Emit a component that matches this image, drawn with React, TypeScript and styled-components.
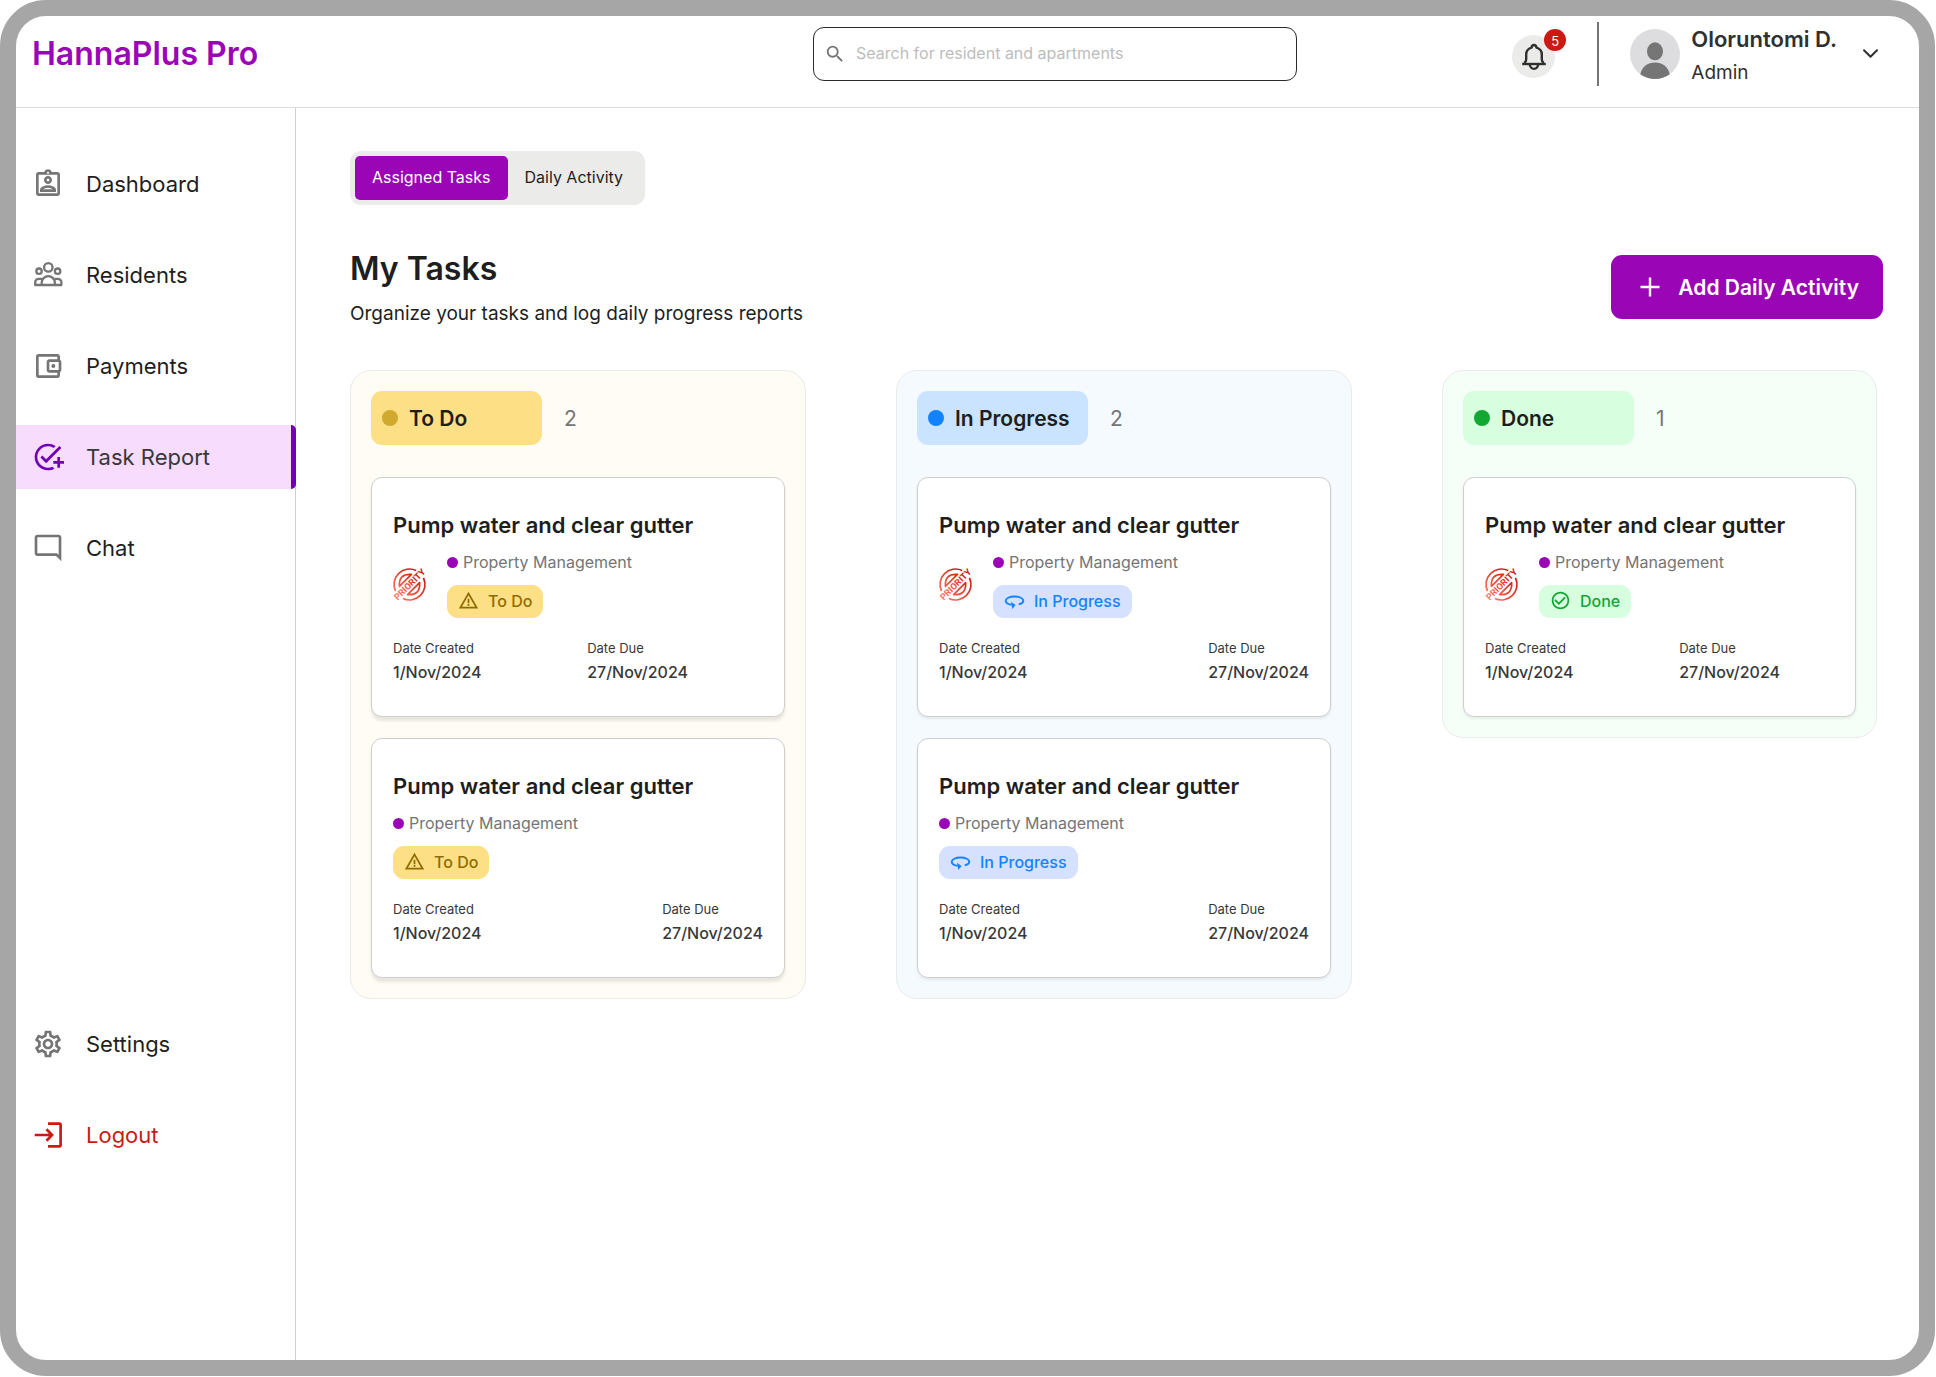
import React from "react";
import styled, { createGlobalStyle, css } from "styled-components";
import {
  MdAddTask,
  MdOutlineAccountBalanceWallet,
  MdOutlineAssignmentInd,
  MdOutlineModeComment,
  MdOutlineSettings,
  MdSearch,
  MdWarningAmber,
  MdCheckCircleOutline,
} from "react-icons/md";

const purple = "#9a06b6";
const ink = "#1e1e1e";
const grey = "#757575";
const red = "#cb1a14";

const GlobalStyle = createGlobalStyle`
  *, *::before, *::after { box-sizing: border-box; }
  body { margin: 0; background: #fff; }
  body, button, input { font-family: Inter, "Liberation Sans", sans-serif; }
  h1, h2, h3, p, ul, dl, dd { margin: 0; padding: 0; }
  ul { list-style: none; }
  button { border: 0; padding: 0; background: none; color: inherit; cursor: pointer; }
  a { color: inherit; text-decoration: none; }
  svg { display: block; flex: none; }
`;

const Frame = styled.div`
  display: flex;
  flex-direction: column;
  min-height: calc(100vh - 1px);
  margin: 0 1px 1px 0;
  border: 16px solid #a6a6a6;
  border-radius: 46px;
  background: #fff;
  color: ${ink};
`;

/* ---------- header ---------- */

const Header = styled.header`
  display: grid;
  grid-template-columns: 781fr 484fr 584fr;
  align-items: center;
  height: 92px;
  padding: 0 38px 16px 16px;
  border-bottom: 1px solid #dcdcdc;
`;

const Brand = styled.a`
  color: ${purple};
  font-size: 32px;
  line-height: 40px;
  font-weight: 600;
`;

const SearchBox = styled.label`
  display: flex;
  align-items: center;
  gap: 10px;
  height: 54px;
  padding: 0 10px;
  border: 1px solid #2b2b2b;
  border-radius: 11px;
  background: #fff;
  color: ${grey};
`;

const SearchInput = styled.input`
  flex: 1;
  min-width: 0;
  border: 0;
  padding: 0 0 2px;
  outline: 0;
  background: none;
  color: ${ink};
  font-size: 16px;
  line-height: 24px;
  &::placeholder {
    color: #bdbdbd;
    opacity: 1;
  }
`;

const HeaderTools = styled.div`
  display: flex;
  align-items: center;
  justify-self: end;
`;

const BellButton = styled.button`
  position: relative;
  width: 54px;
  padding-top: 6px;
  color: #303030;
`;

const BellCircle = styled.span`
  display: flex;
  align-items: center;
  justify-content: center;
  width: 43px;
  height: 43px;
  border-radius: 50%;
  background: #ebebea;
`;

const BellCount = styled.span`
  position: absolute;
  top: 0;
  right: 0;
  width: 22px;
  height: 22px;
  border-radius: 50%;
  background: ${red};
  color: #fff;
  font-size: 13px;
  line-height: 24px;
  text-align: center;
`;

const Divider = styled.span`
  width: 2px;
  height: 64px;
  margin: 0 31px;
  background: ${grey};
`;

const Account = styled.button`
  display: flex;
  align-items: center;
  text-align: left;
  color: #303030;
`;

const AccountText = styled.span`
  display: flex;
  flex-direction: column;
  gap: 8px;
  margin: 0 23px 0 11px;
  padding-top: 2px;
`;

const AccountName = styled.span`
  font-size: 22px;
  line-height: 28px;
  font-weight: 600;
`;

const AccountRole = styled.span`
  font-size: 19px;
  line-height: 24px;
`;

/* ---------- sidebar ---------- */

const Body = styled.div`
  display: flex;
  flex: 1;
`;

const Sidebar = styled.nav`
  display: flex;
  flex-direction: column;
  flex: none;
  gap: 432px;
  width: 280px;
  padding: 44px 0;
  border-right: 1px solid #cfcfcf;
`;

const NavList = styled.ul`
  display: flex;
  flex-direction: column;
  gap: 27px;
`;

const NavLink = styled.a<{ $active?: boolean; $danger?: boolean }>`
  display: flex;
  align-items: center;
  gap: 22px;
  height: 64px;
  padding-left: 16px;
  font-size: 22px;
  line-height: 32px;
  color: ${(p) => (p.$danger ? red : ink)};
  svg {
    color: ${(p) => (p.$danger ? red : grey)};
  }
  ${(p) =>
    p.$active &&
    css`
      margin-right: -1px;
      border-right: 5px solid #6f00b3;
      border-radius: 0 5px 5px 0;
      background: #f7dcfd;
      color: #383838;
      svg {
        color: #6f00b3;
      }
    `}
`;

/* ---------- main ---------- */

const Main = styled.main`
  flex: 1;
  min-width: 0;
  padding: 43px 36px 43px 54px;
`;

const Tabs = styled.div`
  display: inline-flex;
  padding: 5px;
  border-radius: 11px;
  background: #ebebea;
`;

const Tab = styled.button<{ $active?: boolean }>`
  height: 44px;
  padding: 0 17px 2px;
  border-radius: 5px;
  font-size: 16px;
  line-height: 24px;
  background: ${(p) => (p.$active ? purple : "transparent")};
  color: ${(p) => (p.$active ? "#fff" : ink)};
`;

const Heading = styled.div`
  display: flex;
  align-items: center;
  justify-content: space-between;
  margin: 43px 0 44px;
`;

const Title = styled.h1`
  margin-bottom: 12px;
  font-size: 32px;
  line-height: 42px;
  font-weight: 600;
`;

const Subtitle = styled.p`
  font-size: 19px;
  line-height: 24px;
`;

const AddButton = styled.button`
  display: flex;
  align-items: center;
  gap: 11px;
  height: 64px;
  padding: 2px 24px 0;
  border-radius: 11px;
  background: ${purple};
  color: #fff;
  font-size: 21px;
  line-height: 32px;
  font-weight: 600;
`;

const Board = styled.div`
  display: grid;
  grid-template-columns: 456fr 456fr 435fr;
  align-items: start;
  gap: 90px;
  margin-right: 6px;
`;

type Status = "todo" | "progress" | "done";

const tones: Record<
  Status,
  { label: string; surface: string; pill: string; dot: string; badge: string; text: string; shadow: string }
> = {
  todo: {
    label: "To Do",
    surface: "#fffcf5",
    pill: "#fddf86",
    dot: "#d0a92f",
    badge: "#fddf86",
    text: "#8f6c00",
    shadow: "0 4px 3px rgba(0, 0, 0, 0.09)",
  },
  progress: {
    label: "In Progress",
    surface: "#f5faff",
    pill: "#cae3ff",
    dot: "#1283ff",
    badge: "#d5e1ff",
    text: "#1283ff",
    shadow: "0 2px 3px rgba(0, 0, 0, 0.07)",
  },
  done: {
    label: "Done",
    surface: "#f5fff8",
    pill: "#d7ffdf",
    dot: "#12a633",
    badge: "#d7ffdf",
    text: "#12a633",
    shadow: "0 2px 3px rgba(0, 0, 0, 0.07)",
  },
};

const Column = styled.section<{ $status: Status }>`
  display: flex;
  flex-direction: column;
  gap: 21px;
  padding: 20px;
  border: 1px solid #ebebea;
  border-radius: 21px;
  background: ${(p) => tones[p.$status].surface};
`;

const ColumnHeader = styled.div`
  display: flex;
  align-items: center;
  gap: 22px;
  margin-bottom: 11px;
`;

const ColumnPill = styled.h2<{ $status: Status }>`
  display: flex;
  align-items: center;
  gap: 11px;
  width: 171px;
  height: 54px;
  padding: 0 11px;
  border-radius: 11px;
  background: ${(p) => tones[p.$status].pill};
  font-size: 21px;
  line-height: 33px;
  font-weight: 600;
`;

const Dot = styled.span<{ $size: number; $color: string }>`
  flex: none;
  width: ${(p) => p.$size}px;
  height: ${(p) => p.$size}px;
  border-radius: 50%;
  background: ${(p) => p.$color};
`;

const Count = styled.span`
  color: ${grey};
  font-size: 21px;
  line-height: 33px;
`;

const Card = styled.article<{ $status: Status }>`
  padding: 32px 21px;
  border: 1px solid #cfcfcf;
  border-radius: 11px;
  background: #fff;
  box-shadow: ${(p) => tones[p.$status].shadow};
`;

const CardTitle = styled.h3`
  font-size: 22px;
  line-height: 30px;
  font-weight: 600;
`;

const CardMeta = styled.div`
  display: flex;
  align-items: center;
  gap: 21px;
  margin: 10px 0 22px;
`;

const MetaLines = styled.div`
  display: flex;
  flex-direction: column;
  align-items: flex-start;
  gap: 11px;
`;

const Department = styled.p`
  display: flex;
  align-items: center;
  gap: 5px;
  color: ${grey};
  font-size: 16px;
  line-height: 24px;
`;

const Badge = styled.span<{ $status: Status }>`
  display: flex;
  align-items: center;
  gap: 9px;
  height: 33px;
  padding: 0 11px 2px;
  border-radius: 11px;
  background: ${(p) => tones[p.$status].badge};
  color: ${(p) => tones[p.$status].text};
  font-size: 16px;
  line-height: 24px;
  font-weight: 500;
`;

const Dates = styled.dl<{ $compact?: boolean }>`
  display: flex;
  justify-content: space-between;
  max-width: ${(p) => (p.$compact ? "295px" : "none")};
`;

const DateLabel = styled.dt`
  margin-bottom: 4px;
  color: #383838;
  font-size: 13px;
  line-height: 16px;
`;

const DateValue = styled.dd`
  color: #383838;
  font-size: 16px;
  line-height: 24px;
  font-weight: 500;
`;

/* ---------- drawings ---------- */

const PeopleIcon = () => (
  <svg width="32" height="32" viewBox="0 0 32 32" fill="none" stroke="currentColor" strokeWidth="2.3">
    <circle cx="16.3" cy="8.4" r="4.2" />
    <circle cx="7" cy="12.2" r="2.7" />
    <circle cx="25.6" cy="12.2" r="2.7" />
    <path d="M9.7 26v-2.2a6.6 6.6 0 0 1 13.2 0V26" />
    <path d="M10.2 19.8H6.8A3.6 3.6 0 0 0 3.2 23.4V26h26.2v-2.6a3.6 3.6 0 0 0-3.6-3.6h-3.4" strokeLinejoin="round" />
  </svg>
);

const LogoutIcon = () => (
  <svg width="32" height="32" viewBox="0 0 32 32" fill="none" stroke="currentColor" strokeWidth="2.7">
    <path d="M16 4.7h11.3a1.3 1.3 0 0 1 1.3 1.3v20a1.3 1.3 0 0 1-1.3 1.3H16" />
    <path d="M2.7 16h17M14.5 10.3 20 16l-5.5 5.7" />
  </svg>
);

const BellIcon = () => (
  <svg width="28" height="28" viewBox="0 0 28 28" fill="none" stroke="currentColor" strokeWidth="2.4" strokeLinejoin="round">
    <path d="M2.2 21h23.6" />
    <path d="M5 21V19c1-.6 1.2-1.6 1.2-2.8V11.8a7.3 7.3 0 0 1 5.3-7.2C11.7 3 12.6 2 14 2s2.3 1 2.5 2.6a7.3 7.3 0 0 1 5.3 7.2v4.4c0 1.2.2 2.2 1.2 2.8v2" />
    <path d="M9.8 21.3a4.2 4.6 0 0 0 8.4 0" />
  </svg>
);

const AvatarIcon = () => (
  <svg width="50" height="50" viewBox="0 0 50 50">
    <circle cx="25" cy="25" r="25" fill="#dddde0" />
    <ellipse cx="25" cy="22.3" rx="8" ry="9" fill={grey} />
    <path d="M10.3 45.2C12 38 17.5 33.6 25 33.6s13 4.4 14.7 11.6A25 25 0 0 1 10.3 45.2Z" fill={grey} />
  </svg>
);

const ChevronIcon = () => (
  <svg width="21" height="21" viewBox="0 0 21 21" fill="none" stroke="currentColor" strokeWidth="2" strokeLinecap="round" strokeLinejoin="round">
    <path d="m4 7.2 6.5 6.5L17 7.2" />
  </svg>
);

const PlusIcon = () => (
  <svg width="32" height="32" viewBox="0 0 32 32" stroke="currentColor" strokeWidth="2.4">
    <path d="M15 5.5v19M5.500 15h19" />
  </svg>
);

const SpinIcon = () => (
  <svg width="21" height="21" viewBox="0 0 21 21" fill="none" stroke="currentColor" strokeWidth="1.9">
    <path d="M14.8 14.3c2.7-.6 4.5-1.9 4.5-3.5 0-2.4-3.9-4.3-8.8-4.3S1.7 8.4 1.7 10.8c0 1.9 2.5 3.5 6 4.1" />
    <path d="m7 11.7 4.6 3.4L8.3 19Z" fill="currentColor" stroke="none" />
  </svg>
);

const PriorityStamp = ({ id }: { id: string }) => (
  <svg width="33" height="33" viewBox="0 0 33 33" overflow="visible" role="img" aria-label="Priority">
    <defs>
      <linearGradient id={id} gradientUnits="userSpaceOnUse" x1="-16" y1="0" x2="16" y2="0">
        <stop offset="0" stopColor="#ff7361" />
        <stop offset="1" stopColor="#c71505" />
      </linearGradient>
    </defs>
    <g transform="translate(16.5 16.5) rotate(-45)" fill="none" stroke={`url(#${id})`} strokeWidth="1.7">
      <path d="M-14.6-5.2a15.5 15.5 0 0 1 29.2 0M-14.6 5.2a15.5 15.5 0 0 0 29.2 0" />
      <path d="M-8.5-5.8Q0-15.5 8.5-5.8ZM-8.5 5.8Q0 15.5 8.5 5.8Z" strokeLinejoin="round" />
      <text
        x="0"
        y="3.2"
        textAnchor="middle"
        fontFamily="Roboto, sans-serif"
        fontSize="9"
        fontWeight="700"
        fill={`url(#${id})`}
        stroke="none"
      >
        PRIORITY
      </text>
    </g>
  </svg>
);

/* ---------- page ---------- */

type Task = { id: string; priority?: boolean; compact?: boolean };

const columns: { status: Status; tasks: Task[] }[] = [
  { status: "todo", tasks: [{ id: "t1", priority: true, compact: true }, { id: "t2" }] },
  { status: "progress", tasks: [{ id: "p1", priority: true }, { id: "p2" }] },
  { status: "done", tasks: [{ id: "d1", priority: true, compact: true }] },
];

const statusIcon: Record<Status, React.ReactNode> = {
  todo: <MdWarningAmber size={21} />,
  progress: <SpinIcon />,
  done: <MdCheckCircleOutline size={21} />,
};

const TaskCard = ({ task, status }: { task: Task; status: Status }) => (
  <Card $status={status}>
    <CardTitle>Pump water and clear gutter</CardTitle>
    <CardMeta>
      {task.priority && <PriorityStamp id={`stamp-${task.id}`} />}
      <MetaLines>
        <Department>
          <Dot $size={11} $color={purple} />
          Property Management
        </Department>
        <Badge $status={status}>
          {statusIcon[status]}
          {tones[status].label}
        </Badge>
      </MetaLines>
    </CardMeta>
    <Dates $compact={task.compact}>
      <div>
        <DateLabel>Date Created</DateLabel>
        <DateValue>1/Nov/2024</DateValue>
      </div>
      <div>
        <DateLabel>Date Due</DateLabel>
        <DateValue>27/Nov/2024</DateValue>
      </div>
    </Dates>
  </Card>
);

export default function App() {
  return (
    <>
      <GlobalStyle />
      <Frame>
        <Header>
          <Brand href="#">HannaPlus Pro</Brand>
          <SearchBox>
            <MdSearch size={22} />
            <SearchInput
              type="text"
              aria-label="Search for resident and apartments"
              placeholder="Search for resident and apartments"
            />
          </SearchBox>
          <HeaderTools>
            <BellButton aria-label="Notifications">
              <BellCircle>
                <BellIcon />
              </BellCircle>
              <BellCount>5</BellCount>
            </BellButton>
            <Divider />
            <Account>
              <AvatarIcon />
              <AccountText>
                <AccountName>Oloruntomi D.</AccountName>
                <AccountRole>Admin</AccountRole>
              </AccountText>
              <ChevronIcon />
            </Account>
          </HeaderTools>
        </Header>
        <Body>
          <Sidebar>
            <NavList>
              <li>
                <NavLink href="#">
                  <MdOutlineAssignmentInd size={32} />
                  Dashboard
                </NavLink>
              </li>
              <li>
                <NavLink href="#">
                  <PeopleIcon />
                  Residents
                </NavLink>
              </li>
              <li>
                <NavLink href="#">
                  <MdOutlineAccountBalanceWallet size={32} />
                  Payments
                </NavLink>
              </li>
              <li>
                <NavLink href="#" $active aria-current="page">
                  <MdAddTask size={32} />
                  Task Report
                </NavLink>
              </li>
              <li>
                <NavLink href="#">
                  <MdOutlineModeComment size={32} />
                  Chat
                </NavLink>
              </li>
            </NavList>
            <NavList>
              <li>
                <NavLink href="#">
                  <MdOutlineSettings size={32} />
                  Settings
                </NavLink>
              </li>
              <li>
                <NavLink href="#" $danger>
                  <LogoutIcon />
                  Logout
                </NavLink>
              </li>
            </NavList>
          </Sidebar>
          <Main>
            <Tabs>
              <Tab $active>Assigned Tasks</Tab>
              <Tab>Daily Activity</Tab>
            </Tabs>
            <Heading>
              <div>
                <Title>My Tasks</Title>
                <Subtitle>Organize your tasks and log daily progress reports</Subtitle>
              </div>
              <AddButton>
                <PlusIcon />
                Add Daily Activity
              </AddButton>
            </Heading>
            <Board>
              {columns.map(({ status, tasks }) => (
                <Column key={status} $status={status}>
                  <ColumnHeader>
                    <ColumnPill $status={status}>
                      <Dot $size={16} $color={tones[status].dot} />
                      {tones[status].label}
                    </ColumnPill>
                    <Count>{tasks.length}</Count>
                  </ColumnHeader>
                  {tasks.map((task) => (
                    <TaskCard key={task.id} task={task} status={status} />
                  ))}
                </Column>
              ))}
            </Board>
          </Main>
        </Body>
      </Frame>
    </>
  );
}
